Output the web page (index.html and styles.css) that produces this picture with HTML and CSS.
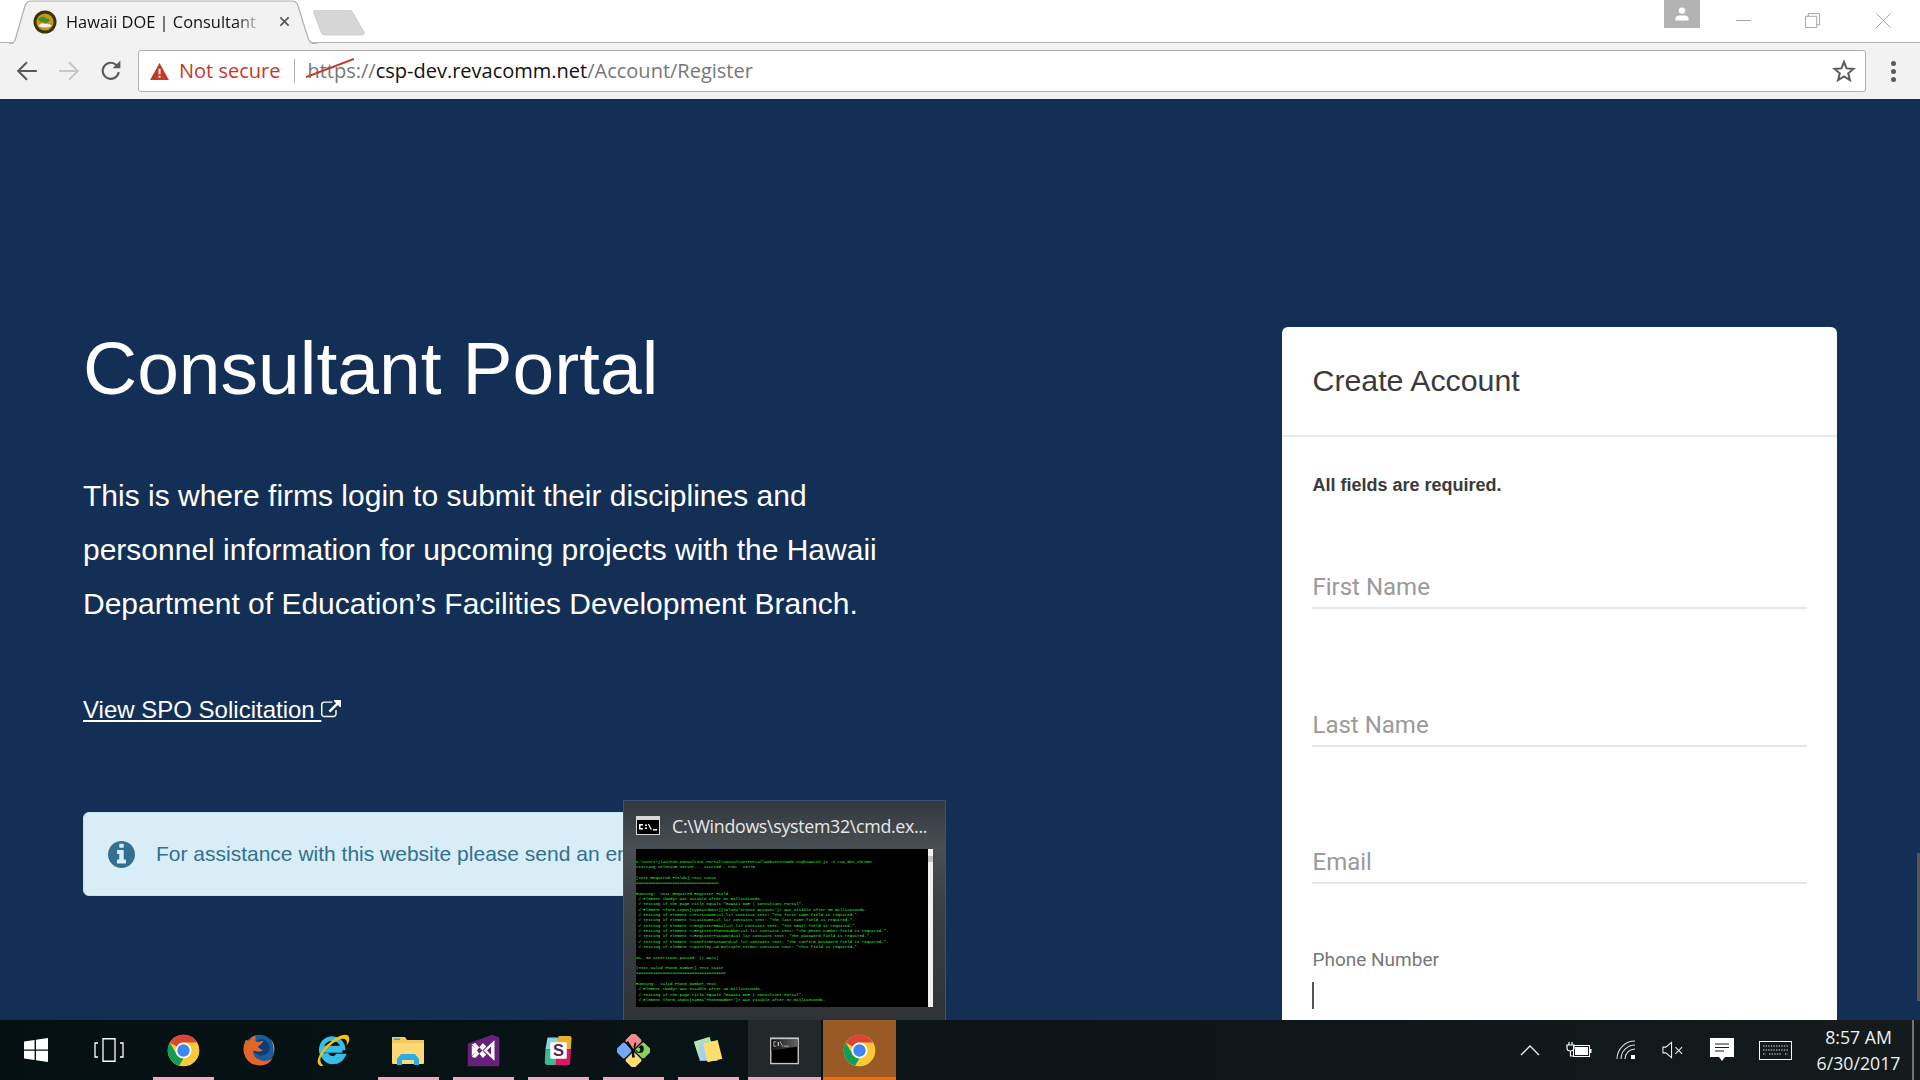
FILE: index.html
```html
<!DOCTYPE html>
<html lang="en">
<head>
<meta charset="utf-8">
<title>Hawaii DOE | Consultant Portal</title>
<link rel="stylesheet" href="styles.css">
</head>
<body>
<div class="screen">
  <header class="chrome">
    <div class="tabstrip">
      <div class="tab">
        <svg class="tab-shape" viewBox="0 0 310 44" preserveAspectRatio="none"><path d="M0 44 C5 44 6 41 7 37 L16 6 C17 2 19 1 23 1 H283 C287 1 289 2 290 6 L300 38 C301 42 303 44 310 44" fill="#f2f2f2" stroke="#b0b0b0" stroke-width="1.2"/></svg>
        <svg class="favicon" viewBox="0 0 24 24"><circle cx="12" cy="12" r="11.5" fill="#3d3208"/><circle cx="12" cy="12" r="8.6" fill="#c09a1a"/><path d="M5 9 Q9 5 13 8 L17 10 L14 13 L8 12z" fill="#3f8f2e"/><path d="M5 16 Q8 12 12 14 Q16 13 19 16 Q12 19 5 16z" fill="#f1efe6"/></svg>
        <span class="tab-title">Hawaii DOE | Consultant</span>
        <svg class="tab-close" viewBox="0 0 12 12"><path d="M1.5 1.5 L10.5 10.5 M10.5 1.5 L1.5 10.5" stroke="#555" stroke-width="1.8"/></svg>
      </div>
      <svg class="newtab" viewBox="0 0 52 26"><path d="M2 0 H36 Q39 0 40 3 L51 22 Q52 25 48 25 H12 Q9 25 8 22 L1 3 Q0 0 2 0z" fill="#d6d6d6" stroke="#cfcfcf"/></svg>
      <div class="winbtns">
        <div class="profile"><svg viewBox="0 0 18 14" class="profile-ico"><circle cx="9" cy="3.6" r="3.2" fill="#fff"/><path d="M2.5 13.5 V11 Q2.5 9 6 8.4 H12 Q15.5 9 15.5 11 V13.5z" fill="#fff"/></svg></div>
        <svg class="winbtn min" viewBox="0 0 16 16"><path d="M0 8 H16" stroke="#a0a0a0" stroke-width="1"/></svg>
        <svg class="winbtn res" viewBox="0 0 16 16"><path d="M.5 3.5 H12.5 V15.5 H.5z M3.5 3.5 V.5 H15.5 V12.5 H12.5" fill="none" stroke="#a0a0a0"/></svg>
        <svg class="winbtn cls" viewBox="0 0 16 16"><path d="M.5 .5 L15.5 15.5 M15.5 .5 L.5 15.5" stroke="#a0a0a0"/></svg>
      </div>
    </div>
    <div class="toolbar">
      <svg class="nav back" viewBox="0 0 20 20"><path d="M19 10 H2 M10 2 L2 10 L10 18" fill="none" stroke="#5a5a5a" stroke-width="1.9"/></svg>
      <svg class="nav fwd" viewBox="0 0 20 20"><path d="M1 10 H18 M10 2 L18 10 L10 18" fill="none" stroke="#c8c8c8" stroke-width="1.9"/></svg>
      <svg class="nav reload" viewBox="0 0 20 20"><path d="M17 11 A7.3 7.3 0 1 1 15 4.7" fill="none" stroke="#5a5a5a" stroke-width="1.9"/><path d="M11.5 7.5 H18.5 V.5z" fill="#5a5a5a"/></svg>
      <div class="omnibox">
        <svg class="warn" viewBox="0 0 20 18"><path d="M10 0 L20 18 H0z" fill="#c53929"/><path d="M9 6 H11 V12 H9z M9 13.5 H11 V15.5 H9z" fill="#fff"/></svg>
        <span class="notsecure">Not secure</span>
        <span class="omni-sep"></span>
        <span class="url"><span class="scheme">https<svg class="strike" viewBox="0 0 50 20" preserveAspectRatio="none"><path d="M0 19 L50 1" stroke="#c53929" stroke-width="2"/></svg></span><span class="path">://</span>csp-dev.revacomm.net<span class="path">/Account/Register</span></span>
        <svg class="star" viewBox="0 0 24 24"><path d="M12 3 L14.6 9.4 L21.5 9.9 L16.2 14.3 L17.9 21 L12 17.4 L6.1 21 L7.8 14.3 L2.5 9.9 L9.4 9.4z" fill="none" stroke="#5a5a5a" stroke-width="2"/></svg>
      </div>
      <div class="menu"><i></i><i></i><i></i></div>
    </div>
  </header>

  <main class="page">
    <section class="intro">
      <h1 class="title">Consultant Portal</h1>
      <p class="lead">This is where firms login to submit their disciplines and personnel information for upcoming projects with the Hawaii Department of Education’s Facilities Development Branch.</p>
      <a class="solicit" href="#">View SPO Solicitation <svg class="ext" viewBox="0 0 1792 1792"><path fill="#fff" d="M1408 928v320q0 119-84.5 203.5t-203.5 84.5h-832q-119 0-203.5-84.5t-84.5-203.5v-832q0-119 84.5-203.5t203.5-84.5h704q14 0 23 9t9 23v64q0 14-9 23t-23 9h-704q-66 0-113 47t-47 113v832q0 66 47 113t113 47h832q66 0 113-47t47-113v-320q0-14 9-23t23-9h64q14 0 23 9t9 23zm384-864v512q0 26-19 45t-45 19-45-19l-176-176-652 652q-10 10-23 10t-23-10l-114-114q-10-10-10-23t10-23l652-652-176-176q-19-19-19-45t19-45 45-19h512q26 0 45 19t19 45z"/></svg></a>
      <div class="alert">
        <svg class="info" viewBox="128 128 1536 1536"><path fill="#31708f" d="M1152 1376v-160q0-14-9-23t-23-9h-96v-512q0-14-9-23t-23-9h-320q-14 0-23 9t-9 23v160q0 14 9 23t23 9h96v320h-96q-14 0-23 9t-9 23v160q0 14 9 23t23 9h448q14 0 23-9t9-23zm-128-896v-160q0-14-9-23t-23-9h-192q-14 0-23 9t-9 23v160q0 14 9 23t23 9h192q14 0 23-9t9-23zm640 416q0 209-103 385.5t-279.5 279.5-385.5 103-385.5-103-279.5-279.5-103-385.5 103-385.5 279.5-279.5 385.5-103 385.5 103 279.5 279.5 103 385.5z"/></svg>
        <span class="alert-text">For assistance with this website please send an email</span>
      </div>
    </section>
    <section class="card">
      <div class="card-head"><h2 class="card-title">Create Account</h2></div>
      <div class="card-body">
        <p class="req">All fields are required.</p>
        <div class="field first"><span class="ph">First Name</span></div>
        <div class="field"><span class="ph">Last Name</span></div>
        <div class="field"><span class="ph">Email</span></div>
        <div class="field active"><span class="float-label">Phone Number</span><span class="caret"></span></div>
      </div>
    </section>
    <div class="edge-bar"></div>
  </main>

  <div class="preview">
    <div class="preview-head">
      <svg class="cmd-small" viewBox="0 0 24 19"><rect width="24" height="19" fill="#d8d8d8"/><rect x="1" y="4" width="22" height="14" fill="#000"/><path d="M3 8 H7 V9.5 H4.5 V12 H7 V13.5 H3z M9 8.5 H11 V10 H9z M9 11.5 H11 V13 H9z M13 8 L16 13.5 H14.5 L11.8 8z M17 13 H21 V14.5 H17z" fill="#fff"/></svg>
      <span class="preview-title">C:\Windows\system32\cmd.ex...</span>
    </div>
    <div class="thumb">
<pre class="term">C:\Users\jlau\PCM-Consultant-Portal\ConsultantPortal\Website&gt;node nightwatch.js -e csp_dev_chrome
Starting selenium server... started - PID:  13776

[Test Required Fields] Test Suite
==================================

Running:  Test Required Register Field
 √ Element &lt;body&gt; was visible after 52 milliseconds.
 √ Testing if the page title equals "Hawaii DOE | Consultant Portal".
 √ Element &lt;form input[type=submit][value='Create Account']&gt; was visible after 30 milliseconds.
 √ Testing if element &lt;#FirstName+ul li&gt; contains text: "The first name field is required.".
 √ Testing if element &lt;#LastName+ul li&gt; contains text: "The last name field is required.".
 √ Testing if element &lt;#RegisterEmail+ul li&gt; contains text: "The email field is required.".
 √ Testing if element &lt;#RegisterPhoneNumber+ul li&gt; contains text: "The phone number field is required.".
 √ Testing if element &lt;#RegisterPassword+ul li&gt; contains text: "The password field is required.".
 √ Testing if element &lt;#ConfirmPassword+ul li&gt; contains text: "The confirm password field is required.".
 √ Testing if element &lt;#parsley-id-multiple-terms&gt; contains text: "This field is required.".

OK. 38 assertions passed. (7.997s)

[Test Valid Phone Number] Test Suite
=====================================

Running:  Valid Phone Number Test
 √ Element &lt;body&gt; was visible after 40 milliseconds.
 √ Testing if the page title equals "Hawaii DOE | Consultant Portal".
 √ Element &lt;form input[name='PhoneNumber']&gt; was visible after 32 milliseconds.</pre>
      <div class="thumb-scroll"><b></b></div>
    </div>
  </div>

  <footer class="taskbar">
    <div class="tb-start"><svg class="win" viewBox="0 0 24 24"><path fill="#fff" d="M0 3.4 L10.6 2 V11.4 H0z M12 1.8 L24 0 V11.4 H12z M0 12.8 H10.6 V22 L0 20.6z M12 12.8 H24 V24 L12 22.2z"/></svg></div>
    <div class="tb-view"><svg class="taskview" viewBox="0 0 30 24"><path d="M9 .75 H21 V23.25 H9z M4 5 H1 V19 H4 M26 5 H29 V19 H26" fill="none" stroke="#fff" stroke-width="1.3"/></svg></div>
    <div class="slot pinned"><svg class="app" viewBox="0 0 48 48"><circle cx="24" cy="24" r="23" fill="#fcc934"/><path d="M24 1 A23 23 0 0 1 43.9 12.5 H24 A11.5 11.5 0 0 0 14 18.2 L4.1 12.5 A23 23 0 0 1 24 1z" fill="#db4437"/><path d="M4.1 12.5 L14 29.8 A11.5 11.5 0 0 0 24 35.5 L17.5 46 A23 23 0 0 1 4.1 12.5z" fill="#0f9d58"/><circle cx="24" cy="24" r="11.5" fill="#fff"/><circle cx="24" cy="24" r="9" fill="#4285f4"/></svg></div>
    <div class="slot"><svg class="app" viewBox="2 2 44 44"><circle cx="25" cy="23" r="20" fill="#1d5a9e"/><circle cx="28" cy="20" r="11" fill="#0e3c78"/><path d="M20 4 Q14 6 12 11 L7 10 Q2 20 5 29 Q9 43 25 44 Q38 44 43 34 Q36 40 27 37 Q15 33 17 24 Q24 27 30 24 Q25 21 23 19 Q28 16 31 11 Q24 13 20 12z" fill="#e0662a"/><path d="M38 6 Q46 14 45 24 Q44 30 43 34 Q47 16 38 6z" fill="#f3b53a"/></svg></div>
    <div class="slot"><svg class="app" viewBox="2 1 44 45"><path d="M7 20 H37 A15 15 0 1 0 10 31 Q15 40 24 39 Q33 39 37 31 H29 Q26 35 22 34 Q15 33 14 27" fill="none" stroke="#39bde8" stroke-width="6"/><path d="M10 24 H36" stroke="#39bde8" stroke-width="5"/><path d="M4 43 Q-2 36 14 17 Q34 -2 44 3 Q48 9 42 17 Q44 4 31 9 Q14 18 7 32 Q4 40 10 44 Q6 46 4 43z" fill="#f2c410"/></svg></div>
    <div class="slot pinned"><svg class="app" viewBox="0 0 33 33"><path d="M0 3 H13 L15 6 H32 V10 H0z" fill="#f2c85c"/><path d="M2 4.5 H8 V6 H2z" fill="#28aee0"/><path d="M0 9 H32 V29 Q32 30 31 30 H1 Q0 30 0 29z" fill="#ffd976"/><path d="M5 31 V25 L9 20 H23 L27 25 V31 H22 V26 H10 V31z" fill="#27b0e8"/></svg></div>
    <div class="slot pinned"><svg class="app" viewBox="0 0 48 48"><path d="M1 14 L36 1 L47 5 V47 H1z" fill="#68217a"/><path d="M40 9 V39 L24 24z" fill="#fff"/><path d="M35 18 V30 L29 24z" fill="#68217a"/><path d="M7 15 L12 13 L28 30 L23 35 Z M7 33 L12 35 L28 18 L23 13 Z" fill="#fff"/><path d="M7 16 L15 24 L7 32z" fill="#fff"/></svg></div>
    <div class="slot pinned"><svg class="app" viewBox="0 0 48 48"><path d="M8 5 H24 L22 22 H5z" fill="#83d5e0"/><path d="M24 3 H40 Q43 3 43 6 L42 22 H22z" fill="#e7b12c"/><path d="M5 22 H22 L20 45 H8 Q4 45 4 41z" fill="#3eb890"/><path d="M22 22 H42 L41 42 Q41 45 37 45 H20z" fill="#dd1667"/><rect x="12" y="12" width="24" height="24" rx="2" fill="#fff"/><text x="24" y="32" class="slack-s">S</text></svg></div>
    <div class="slot pinned"><svg class="app" viewBox="0 0 48 48"><g transform="rotate(45 24 24)"><rect x="5" y="5" width="18" height="18" rx="3" fill="#f58a8f"/><rect x="25" y="5" width="18" height="18" rx="3" fill="#8ccf62"/><rect x="5" y="25" width="18" height="18" rx="3" fill="#74a8f5"/><rect x="25" y="25" width="18" height="18" rx="3" fill="#ffdc72"/></g><path d="M16 10 L24 22 L26 34 L22 34 L21 24 L13 13z M27 22 A6 6 0 1 0 35 16 L31 20 A3 3 0 1 1 31 26z M24 18 L26 12 L28 13 L26 22z" fill="#07100f"/></svg></div>
    <div class="slot pinned"><svg class="app" viewBox="0 0 48 48"><rect x="6" y="7" width="24" height="26" rx="1" transform="rotate(-18 18 20)" fill="#b5e6a5"/><rect x="11" y="11" width="26" height="28" fill="#a5d0f2"/><rect x="19" y="11" width="22" height="28" transform="rotate(-14 30 25)" fill="#ffdd6e"/></svg></div>
    <div class="slot open"><svg class="app" viewBox="0 0 48 48"><defs><linearGradient id="cmdbar" x1="0" y1="0" x2="1" y2="0"><stop offset="0" stop-color="#111"/><stop offset="1" stop-color="#666"/></linearGradient></defs><rect x="3" y="5" width="42" height="39" fill="#c8c8c8"/><rect x="5" y="8" width="38" height="34" fill="#000"/><path d="M5 8 H43 V18 L5 24z" fill="url(#cmdbar)"/><path d="M8 11 H12 V12 H9 V17 H12 V18 H8z M14 12 H16 V14 H14z M14 15 H16 V17 H14z M18 11 L22 18 H21 L17 11z M23 17 H30 V18 H23z" fill="#ddd"/></svg></div>
    <div class="slot current"><svg class="app" viewBox="0 0 48 48"><circle cx="24" cy="24" r="23" fill="#fcc934"/><path d="M24 1 A23 23 0 0 1 43.9 12.5 H24 A11.5 11.5 0 0 0 14 18.2 L4.1 12.5 A23 23 0 0 1 24 1z" fill="#db4437"/><path d="M4.1 12.5 L14 29.8 A11.5 11.5 0 0 0 24 35.5 L17.5 46 A23 23 0 0 1 4.1 12.5z" fill="#0f9d58"/><circle cx="24" cy="24" r="11.5" fill="#fff"/><circle cx="24" cy="24" r="9" fill="#4285f4"/></svg></div>
    <div class="tray">
      <svg class="t-chev" viewBox="0 0 20 12"><path d="M1 11 L10 2 L19 11" fill="none" stroke="#eee" stroke-width="1.3"/></svg>
      <svg class="t-batt" viewBox="0 0 26 18"><path d="M3 1 V4 M6 1 V4 M1 4 H8 V7 Q8 10 4.5 10 Q1 10 1 7z M4.5 10 V15 H8" fill="none" stroke="#fff" stroke-width="1.2"/><rect x="7.5" y="4.5" width="16" height="11" fill="none" stroke="#fff"/><rect x="9" y="6" width="13" height="8" fill="#fff"/><rect x="24" y="8" width="1.5" height="4" fill="#fff"/></svg>
      <svg class="t-wifi" viewBox="0 0 20 20"><path d="M1 19 A18 18 0 0 1 19 1 M5 19 A14 14 0 0 1 19 5 M9 19 A10 10 0 0 1 19 9" fill="none" stroke="#ddd" stroke-width="1.1"/><rect x="15" y="15" width="4" height="4" fill="#fff"/></svg>
      <svg class="t-vol" viewBox="0 0 22 18"><path d="M1 6 H4 L10 1 V17 L4 12 H1z" fill="none" stroke="#eee" stroke-width="1.1"/><path d="M14 6 L21 13 M21 6 L14 13" stroke="#eee" stroke-width="1.1"/></svg>
      <svg class="t-msg" viewBox="0 0 24 24"><path d="M0 0 H24 V19 H15 L12 23 L9 19 H0z" fill="#fff"/><path d="M5 6 H19 M5 9.5 H19 M5 13 H14" stroke="#161e20" stroke-width="1"/></svg>
      <svg class="t-kbd" viewBox="0 0 33 19"><rect x=".5" y=".5" width="32" height="18" fill="none" stroke="#fff"/><path d="M4 5 H29 M4 9 H29 M4 13 H7 M10 13 H23 M26 13 H29" stroke="#ddd" stroke-dasharray="1.4 1.2"/></svg>
      <div class="clock"><span>8:57 AM</span><span>6/30/2017</span></div>
      <div class="show-desk"></div>
    </div>
  </footer>
</div>
</body>
</html>
```
FILE: styles.css
```css
* { box-sizing: border-box; }
html, body { margin: 0; height: 100%; overflow: hidden; }
body { font-family: "Liberation Sans", Arial, sans-serif; background: #132f55; }
.screen { position: relative; height: 1080px; display: flex; flex-direction: column; }

/* browser chrome */
.chrome { flex: none; height: 99px; display: flex; flex-direction: column; background: #f2f2f2; font-family: "Open Sans", sans-serif; }
.tabstrip { height: 43px; display: flex; align-items: flex-start; background: #fff; border-bottom: 1px solid #b4b4b4; padding-left: 9px; }
.tab { position: relative; width: 309px; height: 43px; display: flex; align-items: center; flex: none; }
.tab-shape { position: absolute; left: 0; top: 0; width: 100%; height: 44px; }
.favicon { position: relative; width: 24px; height: 24px; margin-left: 24px; flex: none; }
.tab-title { position: relative; margin-left: 9px; width: 193px; font-size: 16.4px; white-space: nowrap; color: #111; -webkit-mask-image: linear-gradient(90deg, #000 88%, rgba(0,0,0,.15) 100%); mask-image: linear-gradient(90deg, #000 88%, rgba(0,0,0,.15) 100%); }
.tab-close { position: relative; width: 11px; height: 11px; margin-left: 20px; flex: none; }
.newtab { width: 52px; height: 26px; margin: 10px 0 0 -5px; flex: none; }
.winbtns { margin-left: auto; display: flex; align-items: flex-start; }
.profile { width: 36px; height: 28px; background: #b3b3b3; display: flex; align-items: center; justify-content: center; margin-right: 36px; }
.profile-ico { width: 18px; height: 14px; }
.winbtn { width: 15px; height: 15px; margin-top: 13px; flex: none; }
.min { margin-right: 54px; }
.res { margin-right: 56px; }
.cls { margin-right: 29px; }

.toolbar { flex: 1; display: flex; align-items: center; padding-left: 16px; }
.nav { width: 22px; height: 22px; flex: none; }
.back { margin-right: 20px; }
.fwd { margin-right: 20px; }
.reload { margin-right: 16px; }
.omnibox { width: 1728px; height: 42px; background: #fff; border: 1px solid #b0b0b0; border-radius: 3px; display: flex; align-items: center; padding: 0 10px 2px 11px; font-size: 20px; flex: none; }
.warn { width: 19px; height: 17px; flex: none; margin-top: 2px; }
.notsecure { color: #c53929; margin-left: 10px; white-space: nowrap; }
.omni-sep { width: 1px; height: 24px; background: #b0b0b0; margin: 2px 12px 0 14px; flex: none; }
.url { color: #111; white-space: nowrap; }
.scheme { position: relative; color: #777; }
.strike { position: absolute; left: -1px; top: 1px; width: 48px; height: 20px; }
.path { color: #777; }
.star { width: 24px; height: 24px; margin: 2px -1px 0 auto; flex: none; }
.menu { width: 54px; display: flex; flex-direction: column; align-items: center; gap: 3px; flex: none; }
.menu i { width: 5px; height: 5px; border-radius: 50%; background: #5a5a5a; }

/* page */
.page { position: relative; flex: 1; min-height: 0; overflow: hidden; display: flex; justify-content: space-between; padding: 228px 83px 0; background: #132f55; color: #fff; }
.intro { width: 900px; flex: none; }
.title { margin: 0; font-size: 75px; font-weight: 400; line-height: 82px; white-space: nowrap; }
.lead { margin: 60px 0 0; width: 810px; font-size: 30px; line-height: 54px; }
.solicit { display: inline-block; margin-top: 64px; font-size: 24px; line-height: 30px; color: #fff; text-decoration: underline; white-space: nowrap; }
.ext { width: 20px; height: 20px; vertical-align: -2px; }
.alert { width: 800px; height: 84px; margin-top: 87px; padding-left: 24px; display: flex; align-items: center; background: #d9edf7; border: 1px solid #bce8f1; border-radius: 6px; color: #31708f; overflow: hidden; }
.info { width: 27px; height: 27px; flex: none; }
.alert-text { margin-left: 21px; font-size: 21px; white-space: nowrap; }

.card { width: 555px; flex: none; height: 900px; background: #fff; border-radius: 6px 6px 0 0; color: #3a3a3a; }
.card-head { height: 110px; padding: 34px 30px 0 30.5px; border-bottom: 2px solid #e7eaec; }
.card-title { margin: 0; font-size: 30.3px; font-weight: 400; line-height: 40px; }
.card-body { padding: 0 30px; }
.req { margin: 36px 0 0; padding-left: .5px; font-size: 18px; font-weight: 700; line-height: 24px; }
.field { height: 44px; margin-top: 93.5px; padding-top: 7px; border-bottom: 2px solid #e6e6e6; font-family: Roboto, sans-serif; }
.field.first { margin-top: 68px; }
.ph { padding-left: .5px; font-size: 24px; line-height: 30px; color: #9a9a9a; }
.field.active { height: 80px; margin-top: 64px; padding-top: 0; border-bottom: 0; display: flex; flex-direction: column; align-items: flex-start; }
.float-label { padding-left: .5px; font-size: 19px; line-height: 24px; color: #777; }
.caret { width: 2px; height: 27px; margin-top: 10px; background: #555; }
.edge-bar { position: absolute; right: 0; top: 754px; width: 3px; height: 148px; background: #555; }

/* taskbar preview */
.preview { position: absolute; left: 623px; top: 800px; width: 323px; height: 220px; background: linear-gradient(180deg, #33383f 0%, #4a4f54 22%, #3c4146 45%, #2f3338 100%); border: 1px solid #3b5272; border-bottom: 0; padding: 1px 12px 0; font-family: "Open Sans", sans-serif; }
.preview-head { height: 47px; display: flex; align-items: center; }
.cmd-small { width: 24px; height: 19px; flex: none; }
.preview-title { margin-left: 12px; font-size: 17.8px; letter-spacing: -.3px; color: #e8e8e8; white-space: nowrap; }
.thumb { position: relative; width: 297px; height: 158px; background: #000; overflow: hidden; }
.term { margin: 0; padding: 10.6px 0 0 0; font-family: "Liberation Mono", monospace; font-size: 4.05px; line-height: 5.33px; color: #2bff2b; white-space: pre; }
.thumb-scroll { position: absolute; right: 0; top: 0; bottom: 0; width: 5px; background: #f0f0f0; }
.thumb-scroll b { display: block; margin-top: 7px; height: 6px; background: #c4c4c4; }

/* taskbar */
.taskbar { flex: none; height: 60px; display: flex; align-items: stretch; background: linear-gradient(90deg, #041012 0%, #0a1416 45%, #131b1d 100%); color: #f0f0f0; }
.tb-start { width: 71px; flex: none; display: flex; align-items: center; justify-content: center; }
.win { width: 24px; height: 24px; }
.tb-view { width: 75px; flex: none; display: flex; align-items: center; justify-content: center; }
.taskview { width: 30px; height: 24px; }
.slot { position: relative; width: 75px; flex: none; display: flex; align-items: center; justify-content: center; }
.app { width: 33px; height: 33px; }
.pinned::after, .open::after, .current::after { content: ""; position: absolute; bottom: 0; height: 3px; }
.pinned::after { left: 7px; right: 7px; background: #f5a6c0; }
.open { background: #22292b; margin: 0 2px 0 2px; width: 73px; }
.open::after { left: 0; right: 0; background: #f5a6c0; }
.current { background: #9a5a25; width: 73px; }
.current::after { left: 0; right: 0; background: #f46b00; }
.slack-s { font-family: "Liberation Sans", sans-serif; font-size: 24px; font-weight: 700; fill: #4d2a4f; text-anchor: middle; }
.tray { margin-left: auto; display: flex; align-items: center; }
.t-chev { width: 20px; height: 12px; margin-right: 26.5px; }
.t-batt { width: 26px; height: 18px; margin-right: 24px; }
.t-wifi { width: 20px; height: 20px; margin-right: 26px; }
.t-vol { width: 21px; height: 18px; margin-right: 27px; }
.t-msg { width: 24px; height: 24px; margin-right: 24.5px; }
.t-kbd { width: 33px; height: 19px; margin-right: 17px; }
.clock { width: 100px; display: flex; flex-direction: column; align-items: center; font-family: "Open Sans", sans-serif; font-size: 17.7px; line-height: 26px; white-space: nowrap; }
.show-desk { width: 2px; height: 60px; background: #6f7476; margin: 0 6px 0 3.5px; }
```
